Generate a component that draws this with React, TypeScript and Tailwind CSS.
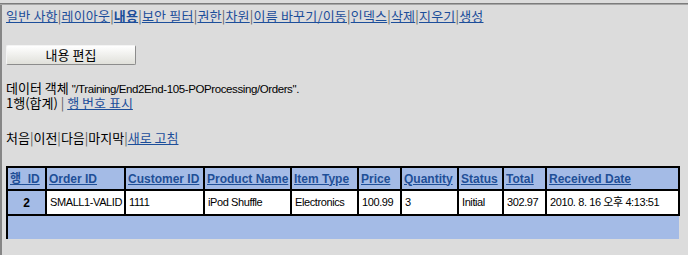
import React from 'react';

const navItems = ['일반 사항', '레이아웃', '내용', '보안 필터', '권한', '차원', '이름 바꾸기/이동', '인덱스', '삭제', '지우기', '생성'];

const columns = [
  { label: 'ID', width: 39 },
  { label: 'Order ID', width: 79 },
  { label: 'Customer ID', width: 79 },
  { label: 'Product Name', width: 87 },
  { label: 'Item Type', width: 67 },
  { label: 'Price', width: 43 },
  { label: 'Quantity', width: 57 },
  { label: 'Status', width: 45 },
  { label: 'Total', width: 43 },
  { label: 'Received Date', width: 133 },
];

const row = ['SMALL1-VALID', '1111', 'iPod Shuffle', 'Electronics', '100.99', '3', 'Initial', '302.97', '2010. 8. 16 오후 4:13:51'];

const Sep = () => <span className="text-[#5c5c5c]">|</span>;

export default function App() {
  const kr = "font-['Noto_Sans_CJK_KR',sans-serif]";
  return (
    <div className="w-[688px] h-[255px] bg-[#dcdcdc] overflow-hidden">
      <div className="h-[3px]" />
      <div className="h-[2px] border-t border-[#7c7c7c] border-b border-b-[#a6a6a6]" />
      <div className="h-[250px] border-l-2 border-[#868686] pl-[4px] pt-[3px]">
        {/* tabs */}
        <div className={`${kr} text-[13px] leading-[16px] h-[16px] tracking-[0.2px] whitespace-nowrap`}>
          {navItems.map((item, i) => (
            <React.Fragment key={item}>
              {i > 0 && <Sep />}
              <span className={`text-[#1c4e9a] underline underline-offset-[1px] ${item === '내용' ? 'font-bold' : ''}`}>{item}</span>
            </React.Fragment>
          ))}
        </div>

        <button className={`${kr} block mt-[21px] w-[130px] h-[20px] text-[13px] leading-[18px] text-black rounded-[2px] border border-t-[#f4f4f4] border-l-[#f4f4f4] border-r-[#8c8c8c] border-b-[#8c8c8c] bg-gradient-to-b from-[#ffffff] to-[#e0e0da]`}>
          내용 편집
        </button>

        <div className={`${kr} mt-[15px] h-[15px] text-[13px] leading-[15px] text-black whitespace-nowrap`}>
          데이터 객체{' '}
          <span className="font-['Liberation_Sans',sans-serif] text-[11.5px] leading-[15px] tracking-[-0.4px]">"/Training/End2End-105-POProcessing/Orders".</span>
        </div>
        <div className={`${kr} h-[15px] text-[13px] leading-[15px] text-black whitespace-nowrap`}>
          1행(합계) <Sep /> <span className="text-[#1c4e9a] underline underline-offset-[1px]">행 번호 표시</span>
        </div>

        <div className={`${kr} mt-[20px] h-[15px] text-[13px] leading-[15px] text-black whitespace-nowrap`}>
          처음<Sep />이전<Sep />다음<Sep />마지막<Sep />
          <span className="text-[#1c4e9a] underline underline-offset-[1px]">새로 고침</span>
        </div>

        <table className="mt-[21px] w-[672px] table-fixed border-collapse font-['Liberation_Sans','Noto_Sans_CJK_KR',sans-serif]">
          <colgroup>
            {columns.map((c) => (
              <col key={c.label} style={{ width: c.width }} />
            ))}
          </colgroup>
          <thead>
            <tr className="h-[23px] bg-[#a4bbe6]">
              {columns.map((c, i) => (
                <th key={c.label} className="border-2 border-black px-[2px] text-left align-middle text-[12px] font-bold text-[#1f4f97] whitespace-nowrap">
                  {i === 0 ? (
                    <span className="underline">
                      <span className={kr}>행</span>&nbsp;&nbsp;ID
                    </span>
                  ) : (
                    <span className="underline">{c.label}</span>
                  )}
                </th>
              ))}
            </tr>
          </thead>
          <tbody>
            <tr className="h-[25px]">
              <td className="border-2 border-black bg-[#a4bbe6] text-center text-[12px] font-bold text-black">2</td>
              {row.map((v, i) => (
                <td key={i} className="border-2 border-black bg-white pl-[3px] pr-0 text-[11px] tracking-[-0.4px] text-black whitespace-nowrap overflow-hidden">
                  {v}
                </td>
              ))}
            </tr>
            <tr className="h-[24px]">
              <td colSpan={10} className="border-l-2 border-t-2 border-black bg-[#a4bbe6]" />
            </tr>
          </tbody>
        </table>
      </div>
    </div>
  );
}
